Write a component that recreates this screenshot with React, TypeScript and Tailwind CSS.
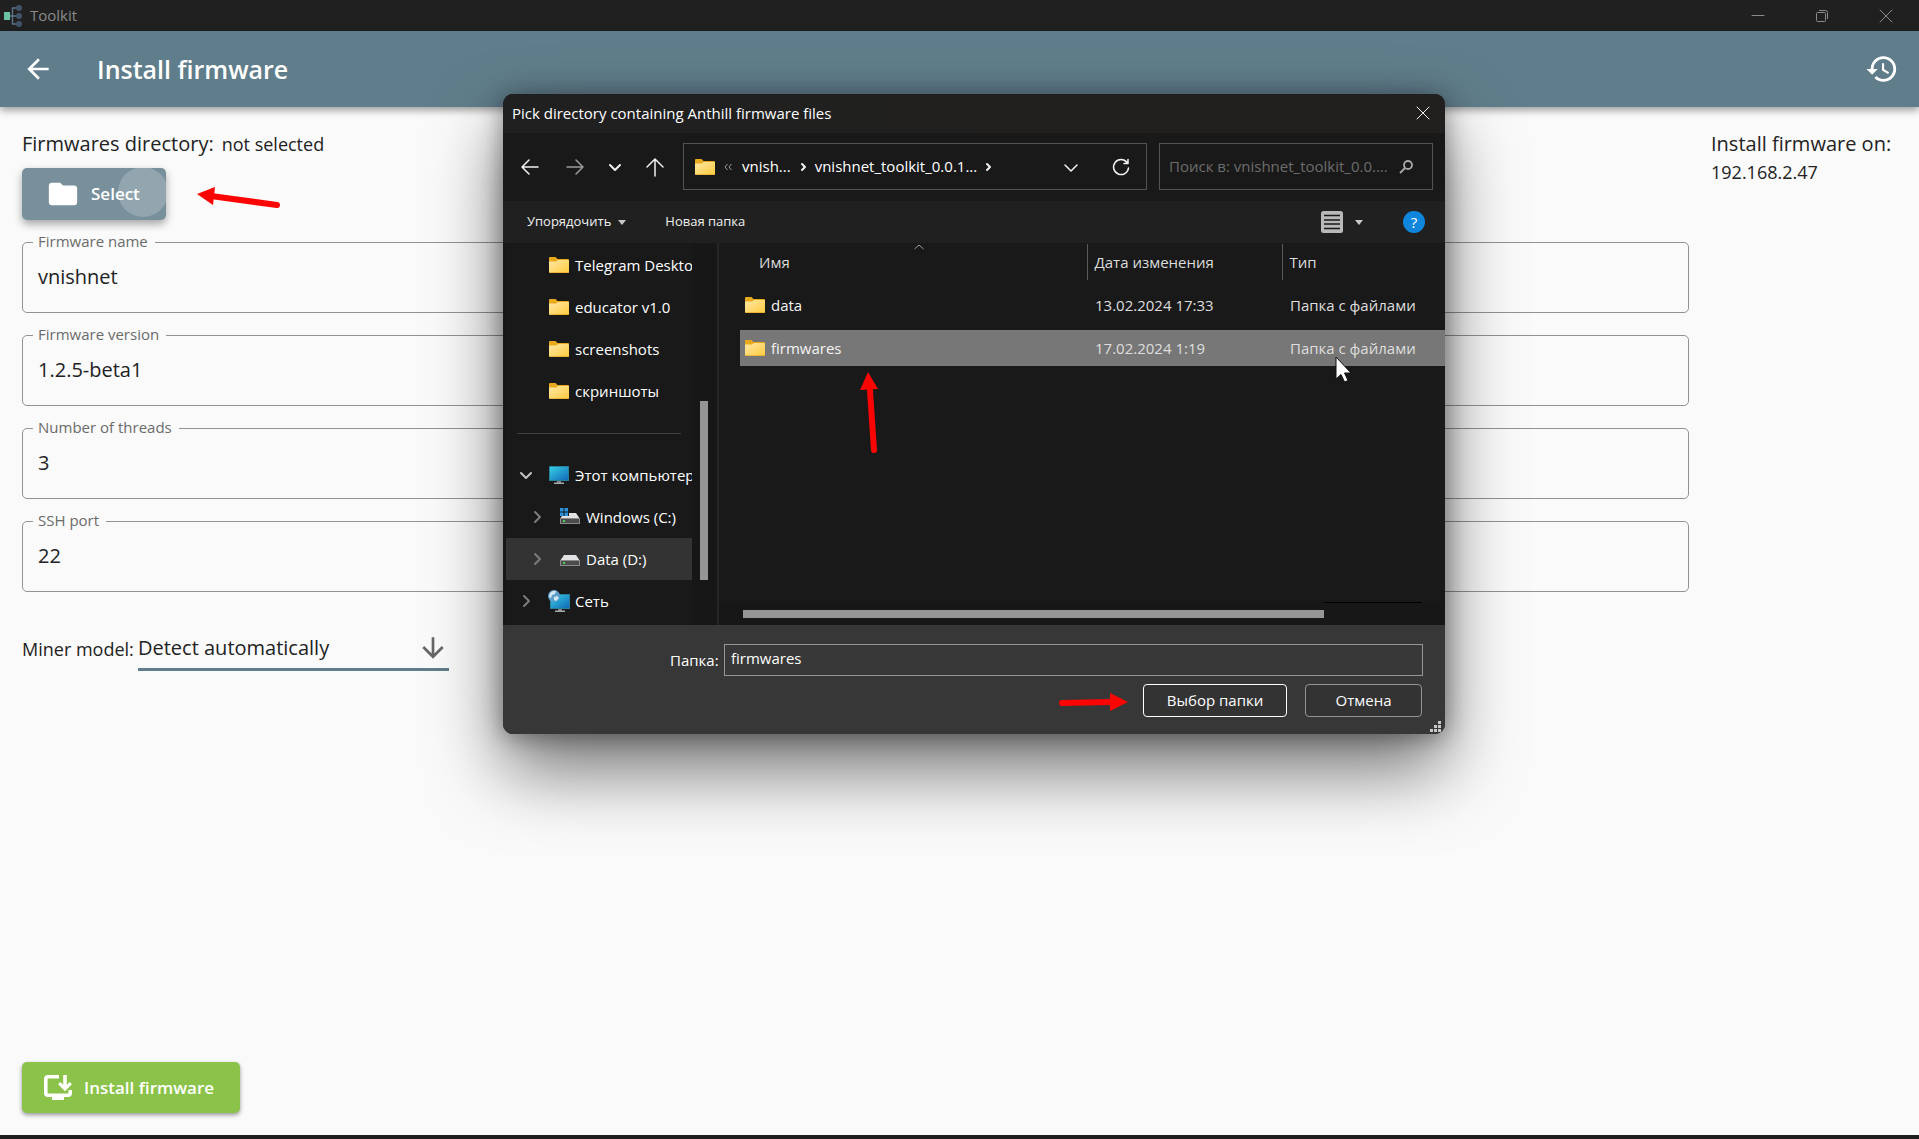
import type { ReactNode } from 'react';
import { MdArrowBack, MdArrowDownward, MdFolder, MdHistory } from 'react-icons/md';

const fields = [
  { id: 'firmware-name', label: 'Firmware name', value: 'vnishnet' },
  { id: 'firmware-version', label: 'Firmware version', value: '1.2.5-beta1' },
  { id: 'threads', label: 'Number of threads', value: '3' },
  { id: 'ssh-port', label: 'SSH port', value: '22' },
];

const files = [
  { name: 'data', date: '13.02.2024 17:33', type: 'Папка с файлами', selected: false },
  { name: 'firmwares', date: '17.02.2024 1:19', type: 'Папка с файлами', selected: true },
];

const pinned = ['Telegram Desktop', 'educator v1.0', 'screenshots', 'скриншоты'];

/* Icons */

function ToolkitLogo() {
  return (
    <svg width="20" height="24" viewBox="0 0 20 24" fill="none">
      <path d="M7 12h8M15 4h-5.5v16H15" stroke="#5b7386" strokeWidth="1.4" />
      <rect x="1" y="8" width="6" height="8" fill="#6cc3a4" />
      <circle cx="16" cy="4" r="3" fill="#3f5468" />
      <circle cx="16" cy="12" r="3" fill="#3f5468" />
      <circle cx="16" cy="20" r="3" fill="#3f5468" />
    </svg>
  );
}

function InstallIcon() {
  return (
    <svg width="28" height="25" viewBox="0 0 28 25" fill="none" stroke="#fff" strokeWidth="3.6">
      <path d="M15 1.8H4Q1.8 1.8 1.8 4V18Q1.8 20.2 4 20.2H24Q26.2 20.2 26.2 18V15" />
      <path d="M21 0V12" />
      <path d="M15.2 8.2L21 14 26.8 8.2" strokeWidth="3.2" />
      <path d="M8 23.5H20" strokeWidth="3" />
    </svg>
  );
}

function FolderIcon() {
  return (
    <svg width="20" height="16" viewBox="0 0 20 16" className="shrink-0">
      <defs>
        <linearGradient id="folder" x1="0" y1="0" x2="1" y2="1">
          <stop offset="0" stopColor="#ffe8a6" />
          <stop offset="1" stopColor="#ffca3e" />
        </linearGradient>
      </defs>
      <path d="M0 1Q0 0 1 0H6.5L8.5 2H19Q20 2 20 3V8H0Z" fill="#e8a91c" />
      <path d="M0 4.5H7L9 3H19Q20 3 20 4V15Q20 16 19 16H1Q0 16 0 15Z" fill="url(#folder)" />
      <path d="M0 15.5H20" stroke="#dfa11e" strokeOpacity="0.6" />
    </svg>
  );
}

function MonitorIcon() {
  return (
    <svg width="20" height="18" viewBox="0 0 20 18" className="shrink-0">
      <defs>
        <linearGradient id="screen" x1="0" y1="0" x2="1" y2="1">
          <stop offset="0" stopColor="#35cfe4" />
          <stop offset="1" stopColor="#1268b8" />
        </linearGradient>
      </defs>
      <rect width="20" height="15" rx="0.5" fill="#2a7f9b" />
      <rect x="1" y="1" width="18" height="13" fill="url(#screen)" />
      <path d="M8 15h4v2H8z" fill="#7d858b" />
      <path d="M5 16.5h10V18H5z" fill="#a3a9ad" />
    </svg>
  );
}

function NetworkIcon() {
  return (
    <svg width="22" height="22" viewBox="0 0 22 22" className="-ml-px shrink-0">
      <rect x="2" y="4" width="20" height="15" fill="#2a7f9b" />
      <rect x="3" y="5" width="18" height="13" fill="url(#screen)" />
      <path d="M10 19h4v2h-4z" fill="#7d858b" />
      <path d="M7 20.5h10V22H7z" fill="#a3a9ad" />
      <circle cx="6" cy="6" r="6" fill="#5d9fca" />
      <path d="M2 3Q5 0 8 1L7 4 4 5 3 8 1 7ZM6 7l3-1 2 2-3 3-2-1z" fill="#d5e8f2" />
    </svg>
  );
}

function DriveIcon({ windows = false }: { windows?: boolean }) {
  return (
    <svg width="20" height="18" viewBox="0 0 20 18" className="shrink-0">
      <path d="M4 5H16L20 11H0Z" fill="#e2e2e4" />
      <rect y="10" width="20" height="6" rx="0.5" fill="#8b8b8b" />
      <rect x="1" y="11" width="18" height="4" fill="#4c4c4c" />
      <rect x="3" y="12" width="2" height="2" fill="#49d15a" />
      {windows && (
        <>
          <rect width="9" height="8" fill="#191919" />
          <path d="M0 0h3.5v3.500H0zM4.5 0H8v3.5H4.5zM0 4.5h3.5V8H0zM4.5 4.5H8V8H4.5z" fill="#2a92dc" />
        </>
      )}
    </svg>
  );
}

function Line({ d, size = 20, stroke = '#f2f2f2', width = 1.5 }: { d: string; size?: number; stroke?: string; width?: number }) {
  return (
    <svg width={size} height={size} viewBox="0 0 20 20" fill="none" className="shrink-0">
      <path d={d} stroke={stroke} strokeWidth={width} strokeLinecap="round" strokeLinejoin="round" />
    </svg>
  );
}

function Caret() {
  return (
    <svg width="8" height="5" viewBox="0 0 8 5">
      <path d="M0 0H8L4 5Z" fill="#c8c8c8" />
    </svg>
  );
}

/* Red pointer; the tip and tail are given in its own box */
function RedArrow({ className, w, h, line, head }: { className: string; w: number; h: number; line: string; head: string }) {
  return (
    <svg width={w} height={h} viewBox={`0 0 ${w} ${h}`} className={`pointer-events-none absolute ${className}`}>
      <path d={line} stroke="#fb0404" strokeWidth="6" strokeLinecap="round" />
      <path d={head} fill="#fb0404" />
    </svg>
  );
}

/* Main window */

function TitleBar() {
  return (
    <div className="flex h-[31px] shrink-0 items-center bg-[#202020] pr-px pl-[3px] text-[#8a8a8a]">
      <ToolkitLogo />
      <span className="flex-1 pl-[7px] text-[15px]">Toolkit</span>
      <button aria-label="Minimize" className="flex h-full w-16 items-center justify-center">
        <Line d="M4 9.5H16" stroke="#8a8a8a" width={1} />
      </button>
      <button aria-label="Restore" className="flex h-full w-16 items-center justify-center">
        <svg width="12" height="12" viewBox="0 0 12 12" fill="none" stroke="#8a8a8a">
          <rect x="0.5" y="2.5" width="9" height="9" rx="1" />
          <path d="M3 0.5H9.5Q11.5 0.5 11.5 2.5V9" />
        </svg>
      </button>
      <button aria-label="Close" className="flex h-full w-16 items-center justify-center">
        <Line d="M4 4L16 16M16 4L4 16" stroke="#8a8a8a" width={1} />
      </button>
    </div>
  );
}

function AppBar() {
  return (
    <header className="relative flex h-[76px] shrink-0 items-center bg-[#607d8b] pr-5 pl-[22px] text-white shadow-[0_3px_8px_rgba(0,0,0,0.4)]">
      <button aria-label="Back">
        <MdArrowBack size={32} />
      </button>
      <h1 className="flex-1 pt-0.5 pl-[43px] text-[25px] font-semibold">Install firmware</h1>
      <button aria-label="History">
        <MdHistory size={34} />
      </button>
    </header>
  );
}

function Field({ id, label, value }: { id: string; label: string; value: string }) {
  return (
    <div className="relative h-[71px] rounded-[5px] border border-[#929292]">
      <label htmlFor={id} className="absolute -top-3 left-[10px] bg-[#fafafa] pr-[7px] pl-[5px] text-[15px] leading-5 text-[#6b6b6b]">
        {label}
      </label>
      <input id={id} defaultValue={value} className="h-full w-full bg-transparent px-[15px] pb-0.5 text-[20px] text-[#222] outline-none" />
    </div>
  );
}

/* Folder dialog */

function TreeRow({ icon, label, state, child = false, active = false }: { icon: ReactNode; label: string; state?: 'open' | 'closed'; child?: boolean; active?: boolean }) {
  return (
    <div className={`flex h-[42px] items-center ${child ? 'pl-[21px]' : 'pl-[10px]'} ${active ? 'bg-[#333]' : ''}`}>
      <span className="flex w-[33px] shrink-0">
        {state === 'open' && <Line d="M5 8L10 13 15 8" stroke="#c4c4c4" width={2} />}
        {state === 'closed' && <Line d="M8 5L13 10 8 15" stroke="#7c7c7c" width={2} />}
      </span>
      <span className="flex w-[26px] shrink-0">{icon}</span>
      <span className="whitespace-nowrap">{label}</span>
    </div>
  );
}

function Tree() {
  return (
    <div className="flex w-[214px] shrink-0 bg-[#171717] pt-px">
      <nav className="ml-[3px] w-[186px] overflow-hidden bg-[#191919] text-white">
        {pinned.map((name) => (
          <TreeRow key={name} icon={<FolderIcon />} label={name} />
        ))}
        <div className="flex h-[42px] items-center px-[11px]">
          <hr className="w-full border-[#404040]" />
        </div>
        <TreeRow icon={<MonitorIcon />} label="Этот компьютер" state="open" />
        <TreeRow icon={<DriveIcon windows />} label="Windows (C:)" state="closed" child />
        <TreeRow icon={<DriveIcon />} label="Data (D:)" state="closed" child active />
        <TreeRow icon={<NetworkIcon />} label="Сеть" state="closed" />
      </nav>
      <div className="ml-2 w-2 pt-[157px]">
        <div className="h-[179px] bg-[#959595]" />
      </div>
    </div>
  );
}

function FileList() {
  return (
    <div className="relative flex min-w-0 flex-1 flex-col border-l-2 border-[#262626] pt-px">
      <svg width="10" height="6" viewBox="0 0 10 6" fill="none" className="absolute top-px left-[195px]">
        <path d="M0.5 5L5 1 9.5 5" stroke="#9c9c9c" />
      </svg>
      <div className="flex-1 pl-[21px]">
        <table className="w-full table-fixed border-collapse text-left">
          <thead>
            <tr className="h-9 text-[#dcdcdc]">
              <th className="p-0 pl-[19px] font-normal">Имя</th>
              <th className="w-[195px] border-l border-[#5a5a5a] p-0 pl-[7px] font-normal">Дата изменения</th>
              <th className="w-[163px] border-l border-[#5a5a5a] p-0 pl-[7px] font-normal">Тип</th>
            </tr>
          </thead>
          <tbody>
            {files.map((file) => (
              <tr key={file.name} className="h-[43px] text-[#dedede]">
                <td className="p-0 pt-[7px]">
                  <div className={`flex h-9 items-center gap-[6px] pl-[5px] text-[#f4f4f4] ${file.selected ? 'bg-[#777]' : ''}`}>
                    <FolderIcon />
                    {file.name}
                  </div>
                </td>
                <td className="p-0 pt-[7px]">
                  <div className={`flex h-9 items-center pl-2 ${file.selected ? 'bg-[#777]' : ''}`}>{file.date}</div>
                </td>
                <td className="p-0 pt-[7px]">
                  <div className={`flex h-9 items-center pl-2 ${file.selected ? 'bg-[#777]' : ''}`}>{file.type}</div>
                </td>
              </tr>
            ))}
          </tbody>
        </table>
      </div>
      <div className="flex h-[23px] bg-[#171717] pr-[23px] pl-6">
        <div className="mt-2 h-2 flex-1 bg-[#959595]" />
        <div className="h-px w-[98px] bg-black" />
      </div>
      <RedArrow className="top-[128px] left-[139px]" w={24} h={86} line="M12 20L16 79" head="M10 1L20 18 2 19Z" />
      <svg width="20" height="28" viewBox="0 0 20 28" className="pointer-events-none absolute top-[113px] left-[616px]">
        <path d="M1 1V23L6 18.5 9.5 26 13 24.5 9.5 17H16Z" fill="#fff" stroke="#111" />
      </svg>
    </div>
  );
}

function FolderDialog() {
  return (
    <div
      role="dialog"
      aria-label="Pick directory containing Anthill firmware files"
      className="absolute top-[94px] left-[503px] flex w-[942px] flex-col overflow-hidden rounded-[10px] bg-[#191919] text-[15px] text-white shadow-[0_36px_72px_rgba(0,0,0,0.54),0_2px_24px_rgba(0,0,0,0.38)]"
    >
      <div className="flex h-[39px] items-center bg-linear-to-r from-[#202020] to-[#22201e] pr-3 pb-px pl-[9px]">
        <h2 className="flex-1">Pick directory containing Anthill firmware files</h2>
        <button aria-label="Close">
          <Line d="M4 4L16 16M16 4L4 16" width={1} />
        </button>
      </div>

      <div className="flex h-[68px] items-center gap-3 px-3 pb-px">
        <div className="flex flex-1 items-center">
          <button aria-label="Back" className="mr-[25px] ml-[5px]">
            <Line d="M18 10H2.5M9 3L2 10 9 17" />
          </button>
          <button aria-label="Forward" className="mr-5">
            <Line d="M2 10H17.5M11 3L18 10 11 17" stroke="#9a9a9a" />
          </button>
          <button aria-label="Recent" className="mr-5">
            <Line d="M5 8L10 13 15 8" width={2} />
          </button>
          <button aria-label="Up" className="mr-[18px]">
            <Line d="M10 19V2M2 10L10 2 18 10" />
          </button>
          <div className="flex h-[47px] flex-1 items-center border border-[#535353] pr-[15px] pl-[11px]">
            <FolderIcon />
            <svg width="8" height="8" viewBox="0 0 8 8" fill="none" stroke="#9a9a9a" className="mr-[10px] ml-[9px]">
              <path d="M3.5 1L1 4 3.5 7M7.5 1L5 4 7.5 7" />
            </svg>
            <a href="#vnish" className="mr-0.5">vnish...</a>
            <Line d="M9 7L12 10 9 13" width={2} />
            <a href="#toolkit" className="mr-px ml-0.5">vnishnet_toolkit_0.0.1...</a>
            <Line d="M9 7L12 10 9 13" width={2} />
            <button aria-label="Previous locations" className="mr-[30px] ml-auto">
              <Line d="M4 8L10 14 16 8" />
            </button>
            <button aria-label="Refresh">
              <Line d="M16 5.500A7.500 7.500 0 1 0 17.500 11M17 2.500V6.500H13" />
            </button>
          </div>
        </div>
        <div className="flex h-[47px] w-[274px] items-center border border-[#535353] pr-[19px] pl-[9px]">
          <input
            aria-label="Поиск"
            placeholder="Поиск в: vnishnet_toolkit_0.0...."
            className="min-w-0 flex-1 bg-transparent outline-none placeholder:text-[#6c6c6c]"
          />
          <svg width="14" height="14" viewBox="0 0 14 14" fill="none" stroke="#a8a8a8">
            <circle cx="9" cy="5" r="4" strokeWidth="1.8" />
            <path d="M6 8L1 13" strokeWidth="1.8" />
          </svg>
        </div>
      </div>

      <div className="flex h-[42px] items-center bg-[#202020] pr-5 pl-6 text-[13px] text-[#f0f0f0]">
        <button className="mr-[39px] flex items-center gap-[7px]">
          Упорядочить
          <Caret />
        </button>
        <button>Новая папка</button>
        <button aria-label="View" className="mr-10 ml-auto flex items-center gap-3">
          <svg width="22" height="22" viewBox="0 0 22 22">
            <rect width="22" height="22" rx="2.5" fill="#b9b9b9" />
            <path d="M3 4.5H19M3 9H19M3 13H19M3 17.5H19" stroke="#191919" strokeWidth="1.5" />
          </svg>
          <Caret />
        </button>
        <button aria-label="Help" className="h-[22px] w-[22px] rounded-full bg-[#0f86db] text-[15px] leading-[22px] text-white">
          ?
        </button>
      </div>

      <div className="flex h-[382px]">
        <Tree />
        <FileList />
      </div>

      <div className="relative flex flex-col gap-2 bg-[#373737] pt-[19px] pr-[22px] pb-[17px]">
        <div className="flex items-center pl-[167px]">
          <label htmlFor="folder-name" className="w-[54px]">Папка:</label>
          <input id="folder-name" defaultValue="firmwares" className="h-8 flex-1 border border-[#969696] bg-[#383838] px-[6px] pb-1 outline-none" />
        </div>
        <div className="flex justify-end gap-[18px] pr-px">
          <button className="h-[33px] w-36 rounded-[4px] border border-white bg-[#333]">Выбор папки</button>
          <button className="h-[33px] w-[117px] rounded-[4px] border border-[#949494] bg-[#333]">Отмена</button>
        </div>
        <svg width="11" height="11" viewBox="0 0 11 11" fill="#c9c9c9" className="absolute right-1 bottom-0.5">
          <path d="M8 0h3v3H8zM4 4h3v3H4zM8 4h3v3H8zM0 8h3v3H0zM4 8h3v3H4zM8 8h3v3H8z" />
        </svg>
        <RedArrow className="top-[67px] left-[554px]" w={74} h={20} line="M5 11L54 10" head="M53 1L71 10 53 19Z" />
      </div>
    </div>
  );
}

export default function App() {
  return (
    <div className="relative flex min-h-screen flex-col overflow-hidden bg-[#fafafa] font-['Open_Sans','Noto_Sans',sans-serif] text-[#222]">
      <TitleBar />
      <AppBar />

      <main className="flex flex-1 gap-[22px] px-[22px] pb-[22px]">
        <section className="flex min-w-0 flex-1 flex-col items-start">
          <p className="mt-[22px] mb-[9px] flex h-[30px] items-center gap-2 text-[20px]">
            Firmwares directory: <span className="text-[18px]">not selected</span>
          </p>
          <div className="relative">
            <button className="relative flex h-[52px] w-36 items-center gap-[11px] overflow-hidden rounded-[5px] bg-[#78909c] pl-6 text-[17px] font-semibold text-white">
              <MdFolder size={34} />
              Select
              <span className="absolute -top-px left-24 h-[50px] w-[50px] rounded-full bg-white/20" />
            </button>
            <div className="pointer-events-none absolute inset-0 rounded-[5px] shadow-[0_4px_8px_rgba(0,0,0,0.35)]" />
            <RedArrow className="top-[18px] left-[174px]" w={86} h={24} line="M15 10L81 19" head="M1 8L19 1 17 19Z" />
          </div>

          <div className="mt-[22px] flex w-full flex-col gap-[22px]">
            {fields.map((field) => (
              <Field key={field.id} {...field} />
            ))}
          </div>

          <div className="mt-9 flex items-center">
            <label htmlFor="miner-model" className="w-[116px] whitespace-nowrap text-[18px]">Miner model:</label>
            <div className="relative border-b-[3px] border-[#607d8b]">
              <select id="miner-model" className="h-10 w-[311px] appearance-none bg-transparent text-[20px] outline-none">
                <option>Detect automatically</option>
              </select>
              <MdArrowDownward size={32} className="pointer-events-none absolute top-1 right-0 text-[#666]" />
            </div>
          </div>

          <button className="mt-auto flex h-[51px] w-[218px] items-center gap-3 rounded-[5px] bg-[#8bc34a] pl-[22px] text-[17px] font-semibold text-white shadow-[0_2px_4px_rgba(0,0,0,0.4)]">
            <InstallIcon />
            Install firmware
          </button>
        </section>

        <aside className="w-[186px] shrink-0 pt-[22px] whitespace-nowrap">
          <p className="h-[30px] text-[20px] leading-[30px]">Install firmware on:</p>
          <p className="text-[18px] leading-[26px]">192.168.2.47</p>
        </aside>
      </main>

      <div className="h-1 shrink-0 bg-[#1f1f1f]" />

      <FolderDialog />
    </div>
  );
}
